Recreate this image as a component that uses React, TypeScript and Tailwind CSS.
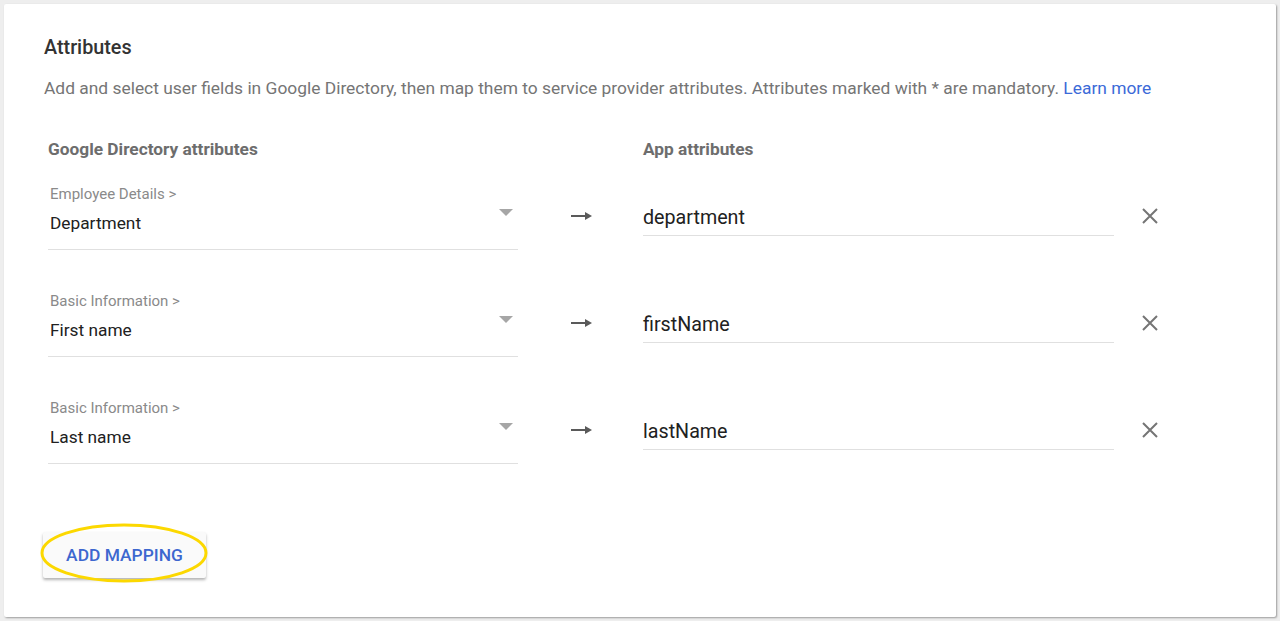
import React from "react";

const rows = [
  { group: "Employee Details >", field: "Department", app: "department" },
  { group: "Basic Information >", field: "First name", app: "firstName" },
  { group: "Basic Information >", field: "Last name", app: "lastName" },
];

const MappingRow = ({ group, field, app }: { group: string; field: string; app: string }) => {
  return (
    <div className="flex items-start h-[107px]">
      <div className="relative w-[470px] border-b border-[#e0e0e0] px-[2px] pb-[14px]">
        <div className="text-[15px] leading-[20px] text-[#8a8a8a]">{group}</div>
        <div className="mt-[7px] text-[17.3px] leading-[24px] text-[#212121]">{field}</div>
        <svg
          className="absolute right-[5px] top-[25px]"
          width="14"
          height="7"
          viewBox="0 0 14 7"
        >
          <path d="M0 0 L14 0 L7 7 Z" fill="#a6a6a6" />
        </svg>
      </div>
      <svg className="ml-[53px] mt-[26px]" width="21" height="12" viewBox="0 0 21 12">
        <path d="M0 6 H15" stroke="#5a5a5a" strokeWidth="2" />
        <path d="M14 2 L21 6 L14 10 Z" fill="#5a5a5a" />
      </svg>
      <div className="ml-[51px] mt-[22px] w-[471px] border-b border-[#e0e0e0] pb-[4px]">
        <span className="text-[19.7px] leading-[24px] text-[#212121]">{app}</span>
      </div>
      <svg className="ml-[27px] mt-[23px]" width="18" height="18" viewBox="0 0 18 18">
        <path d="M2 2 L16 16 M16 2 L2 16" stroke="#757575" strokeWidth="2" />
      </svg>
    </div>
  );
};

const App = () => {
  return (
    <div
      className="h-[621px] w-[1280px] overflow-hidden bg-[#eeeeee] p-[4px]"
      style={{ fontFamily: "Roboto, 'Liberation Sans', sans-serif" }}
    >
      <div className="h-[613px] rounded-[2px] bg-white px-[40px] pt-[32px] shadow-[1px_1px_2px_rgba(0,0,0,0.35)]">
        <h2 className="text-[19.8px] leading-[24px] font-medium text-[#333333]">Attributes</h2>
        <p className="mt-[16px] text-[17.4px] leading-[24px] text-[#757575] whitespace-nowrap">
          Add and select user fields in Google Directory, then map them to service provider
          attributes. Attributes marked with * are mandatory.{" "}
          <a className="text-[#3b6ad8]" href="#">
            Learn more
          </a>
        </p>

        <div className="pl-[4px]">
          <div className="mt-[37px] flex text-[17.3px] leading-[24px] font-bold text-[#6d6d6d]">
            <div className="w-[595px]">Google Directory attributes</div>
            <div>App attributes</div>
          </div>
          <div className="mt-[23px]">
            {rows.map((r) => (
              <MappingRow key={r.app} {...r} />
            ))}
          </div>
        </div>

        <div className="relative mt-[27px] inline-block">
          <button className="h-[46px] w-[163px] -ml-[1px] rounded-[2px] bg-[#fafafa] text-[17.4px] font-medium text-[#3d67cf] shadow-[0_2px_3px_rgba(0,0,0,0.3)]">
            ADD MAPPING
          </button>
          <svg
            className="pointer-events-none absolute left-[-4px] top-[-9px]"
            width="170"
            height="62"
            viewBox="0 0 170 62"
          >
            <ellipse cx="84" cy="30" rx="82" ry="28" fill="none" stroke="#fcd800" strokeWidth="3" />
          </svg>
        </div>
      </div>
    </div>
  );
};

export default App;
